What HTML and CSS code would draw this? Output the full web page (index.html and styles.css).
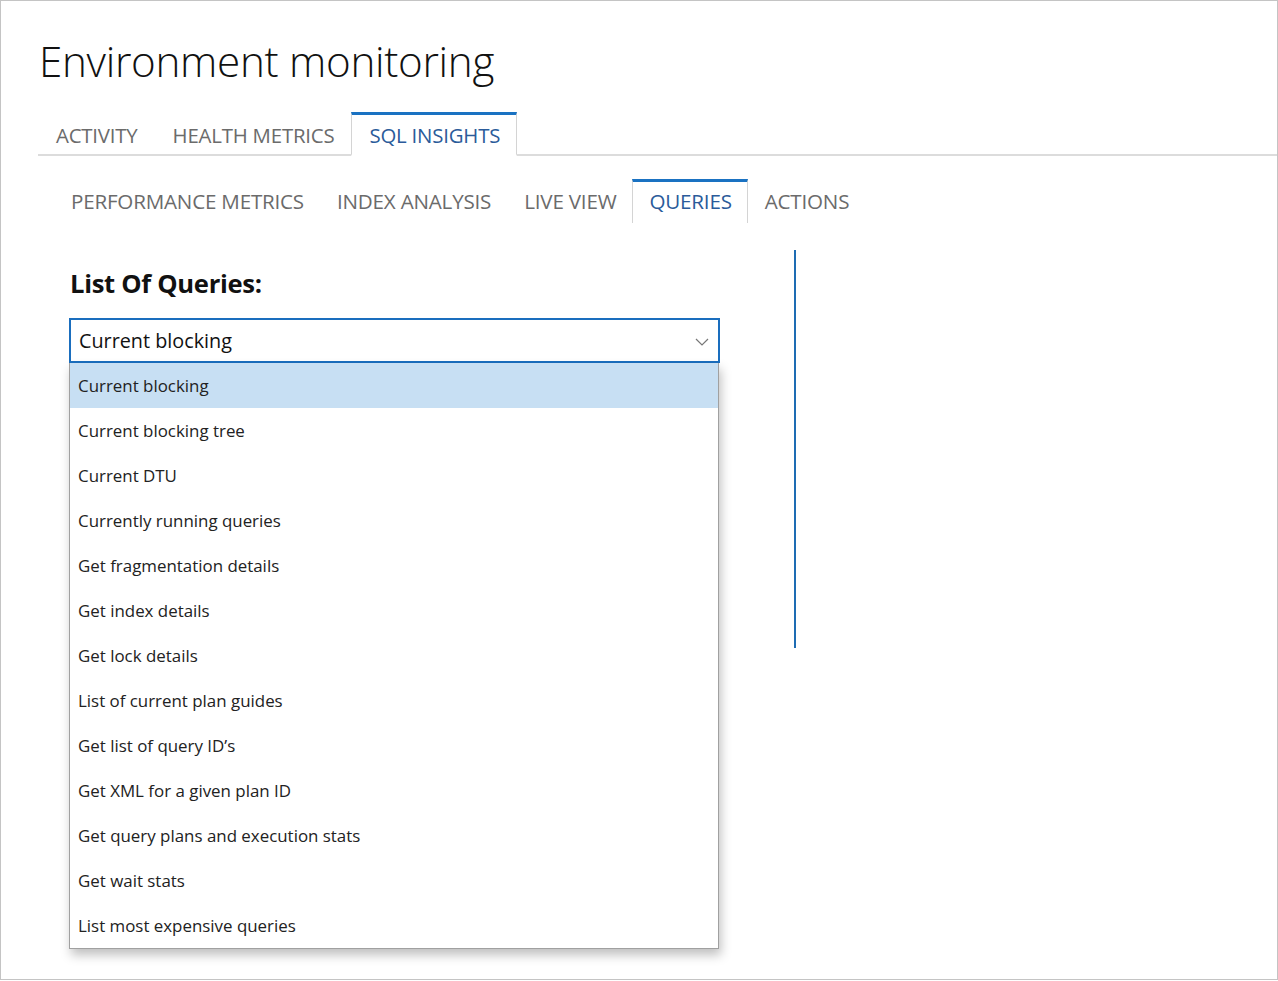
FILE: index.html
```html
<!DOCTYPE html>
<html>
<head>
<meta charset="utf-8">
<link rel="stylesheet" href="styles.css">
</head>
<body>
<div class="frame">
  <h1 class="title">Environment monitoring</h1>
  <div class="tabs">
    <div class="tab">ACTIVITY</div>
    <div class="tab">HEALTH METRICS</div>
    <div class="tab active">SQL INSIGHTS</div>
  </div>
  <div class="subtabs">
    <div class="subtab">PERFORMANCE METRICS</div>
    <div class="subtab">INDEX ANALYSIS</div>
    <div class="subtab">LIVE VIEW</div>
    <div class="subtab active">QUERIES</div>
    <div class="subtab">ACTIONS</div>
  </div>
  <div class="content">
    <div class="left">
      <h2 class="label">List Of Queries:</h2>
      <div class="select">
        <span>Current blocking</span>
        <svg class="chev" width="14" height="8" viewBox="0 0 14 8"><path d="M1 1 L7 7 L13 1" fill="none" stroke="#777" stroke-width="1.2"/></svg>
      </div>
      <ul class="menu">
        <li class="sel">Current blocking</li>
        <li>Current blocking tree</li>
        <li>Current DTU</li>
        <li>Currently running queries</li>
        <li>Get fragmentation details</li>
        <li>Get index details</li>
        <li>Get lock details</li>
        <li>List of current plan guides</li>
        <li>Get list of query ID’s</li>
        <li>Get XML for a given plan ID</li>
        <li>Get query plans and execution stats</li>
        <li>Get wait stats</li>
        <li>List most expensive queries</li>
      </ul>
    </div>
    <div class="divider"></div>
  </div>
</div>
</body>
</html>
```
FILE: styles.css
```css
html, body { margin: 0; padding: 0; background: #fff; }
body { font-family: "Open Sans", "Noto Sans", sans-serif; color: #222; }
.frame {
  box-sizing: border-box;
  width: 1278px;
  height: 980px;
  border: 1px solid #c4c4c4;
  padding-top: 34px;
  overflow: hidden;
}
.title {
  margin: 0 0 0 38px;
  font-weight: 300;
  font-size: 42.2px;
  line-height: 52px;
  color: #111;
  letter-spacing: -0.3px;
}
.tabs {
  display: flex;
  margin: 25px 0 0 37px;
  border-bottom: 2px solid #dcdcdc;
  height: 42px;
  align-items: stretch;
}
.tab {
  font-size: 20.4px;
  color: #6b6b6b;
  padding: 6px 16px 0 17px;
  box-sizing: border-box;
  border: 1px solid transparent;
  border-top: 3px solid transparent;
  margin-bottom: -2px;
  letter-spacing: -0.2px;
}
.tab.active {
  color: #2b5b9a;
  border-color: #d4d4d4;
  border-top-color: #1a72c2;
  border-bottom: 2px solid #fff;
}
.subtabs {
  display: flex;
  margin: 23px 0 0 53px;
  height: 44px;
}
.subtab {
  font-size: 20.6px;
  color: #6b6b6b;
  padding: 5px 15px 0 16px;
  box-sizing: border-box;
  border: 1px solid transparent;
  border-top: 3px solid transparent;
  border-bottom: none;
  letter-spacing: -0.2px;
}
.subtab.active {
  color: #2b5b9a;
  border-color: #d4d4d4;
  border-top-color: #1a72c2;
}
.content {
  display: flex;
  padding-left: 68px;
  margin-top: 27px;
}
.left { width: 651px; padding-top: 17px; }
.label {
  margin: 0 0 0 1px;
  font-size: 25.6px;
  font-weight: 700;
  line-height: 34px;
  color: #111;
  letter-spacing: -0.3px;
}
.select {
  margin-top: 17px;
  box-sizing: border-box;
  width: 651px;
  height: 45px;
  border: 2px solid #1a6ebe;
  display: flex;
  align-items: center;
  justify-content: space-between;
  padding: 0 9px 0 8px;
  font-size: 19.8px;
  color: #111;
}
.chev { margin-top: 3px; }
.menu {
  list-style: none;
  margin: 0;
  padding: 0;
  width: 650px;
  box-sizing: border-box;
  border: 1px solid #a0a0a0;
  border-top: none;
  box-shadow: 2px 6px 10px rgba(0,0,0,0.25);
}
.menu li {
  height: 45px;
  line-height: 45px;
  padding-left: 8px;
  font-size: 16.9px;
  color: #222;
}
.menu li.sel { background: #c7dff3; }
.divider {
  width: 2px;
  height: 398px;
  background: #1e6cb3;
  margin-left: 74px;
  margin-top: 0;
}
```
